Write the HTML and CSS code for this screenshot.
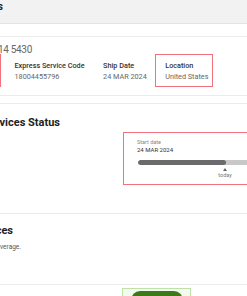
FILE: index.html
```html
<!DOCTYPE html>
<html lang="en">
<head>
    <meta charset="UTF-8">
    <meta name="viewport" content="width=device-width, initial-scale=1.0">
    <title>Product Details</title>
    <link rel="stylesheet" href="styles.css">
</head>
<body>
    <header class="page-header">
        <h1 class="page-title">Product Details</h1>
    </header>

    <main class="main">
        <!-- Overview -->
        <section class="card overview">
            <p class="tag-line">Service Tag 7HX14 5430</p>
            <div class="spec-row">
                <div class="spec spec-cut highlight">
                    <div class="spec-label">Service Tag</div>
                    <div class="spec-value">7HX145430</div>
                </div>
                <div class="spec">
                    <div class="spec-label">Express Service Code</div>
                    <div class="spec-value">18004455796</div>
                </div>
                <div class="spec">
                    <div class="spec-label">Ship Date</div>
                    <div class="spec-value">24 MAR 2024</div>
                </div>
                <div class="spec highlight">
                    <div class="spec-label">Location</div>
                    <div class="spec-value">United States</div>
                </div>
            </div>
        </section>

        <!-- Status -->
        <section class="card status">
            <h2 class="section-title status-title">Warranty &amp; Services Status</h2>
            <div class="timeline highlight">
                <div class="timeline-label">Start date</div>
                <div class="timeline-date">24 MAR 2024</div>
                <div class="track">
                    <div class="track-fill" style="width: 43%"></div>
                </div>
                <div class="today" style="margin-left: calc(43% - 8px)">
                    <span class="today-arrow"></span>
                    <span class="today-label">today</span>
                </div>
            </div>
        </section>

        <!-- Services -->
        <section class="card services">
            <h2 class="section-title services-title">Included Services</h2>
            <p class="section-desc">Services included with your coverage.</p>
        </section>

        <div class="actions">
            <div class="action-box">
                <button class="btn-primary">Save</button>
            </div>
        </div>
    </main>
</body>
</html>
```

FILE: styles.css
```css
* {
    margin: 0;
    padding: 0;
    box-sizing: border-box;
}

body {
    font-family: Roboto, "Liberation Sans", sans-serif;
    background: #fff;
    color: #222;
    overflow: hidden;
}

.page-header {
    height: 24px;
    background: #f2f2f2;
    border-bottom: 1px solid #e3e3e3;
}

/* page is scrolled to the right, titles end near the left edge */
.page-title {
    width: 120px;
    margin-left: -117px;
    text-align: right;
    font-size: 10px;
    font-weight: 700;
    line-height: 14px;
}

.main {
    padding-top: 12px;
}

.card {
    background: #fff;
    border-top: 1px solid #ececec;
}

.overview {
    padding: 10px 0 8px;
    margin-bottom: 7px;
    border-bottom: 1px solid #ececec;
}

.tag-line {
    width: 150px;
    margin-left: -118px;
    text-align: right;
    font-size: 10px;
    letter-spacing: -0.3px;
    line-height: 6px;
    color: #666;
}

.spec-row {
    display: flex;
    gap: 3px;
    margin-top: 1px;
}

.spec {
    flex: none;
    border: 1.5px solid transparent;
    padding: 6px 4px 4px 9.5px;
    line-height: 10.5px;
    font-size: 7.25px;
}

.spec-cut {
    width: 80px;
    margin-left: -79px;
}

.highlight {
    border-color: #f0707d;
}

.spec-label {
    font-weight: 500;
    color: #333;
}

.spec-value {
    color: #666;
}

.status {
    padding: 12px 0 28px;
}

.section-title {
    text-align: right;
    font-size: 11px;
    font-weight: 700;
    line-height: 14px;
    color: #222;
}

.status-title {
    width: 160px;
    margin-left: -100px;
}

.timeline {
    width: 220px;
    margin: 2px 0 0 123px;
    border: 1.5px solid #f0707d;
    padding: 5px 0 5px 13px;
}

.timeline-label {
    font-size: 5.5px;
    line-height: 8px;
    color: #888;
}

.timeline-date {
    font-size: 6px;
    line-height: 8px;
    color: #333;
}

.track {
    height: 5px;
    margin: 5.5px 0 0 1px;
    background: #c8c8c8;
    border-radius: 3px;
    overflow: hidden;
}

.track-fill {
    height: 100%;
    background: #6b6b6b;
    border-radius: 3px;
}

.today {
    width: 16px;
    display: flex;
    flex-direction: column;
    align-items: center;
    padding-top: 3px;
}

.today-arrow {
    width: 0;
    height: 0;
    border-left: 2.5px solid transparent;
    border-right: 2.5px solid transparent;
    border-bottom: 3px solid #666;
}

.today-label {
    font-size: 5.5px;
    line-height: 8px;
    color: #777;
}

.services {
    padding: 10px 0 32px;
    border-bottom: 1px solid #ececec;
}

.services-title {
    width: 120px;
    margin-left: -107px;
}

.section-desc {
    width: 140px;
    margin: 5px 0 0 -119px;
    text-align: right;
    font-size: 6.5px;
    line-height: 9px;
    color: #555;
}

.actions {
    padding: 3px 0 0 122px;
}

.action-box {
    display: inline-block;
    border: 1.5px solid #bfe0a8;
    background: #f3faee;
    padding: 2px 7.5px 0;
}

.btn-primary {
    display: block;
    width: 52px;
    height: 18px;
    border: none;
    border-radius: 9px;
    background: #3b7a16;
    color: #fff;
    font-family: inherit;
    font-size: 8px;
}
```
